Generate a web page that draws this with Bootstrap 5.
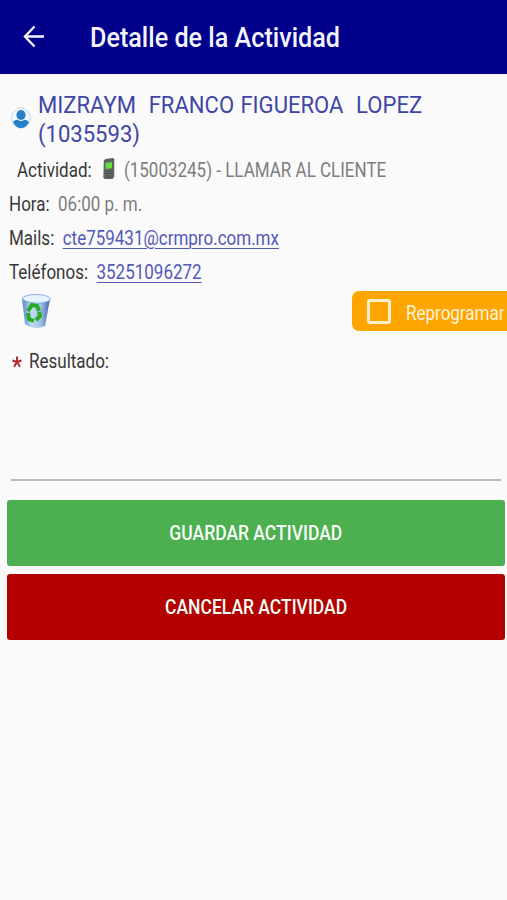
<!DOCTYPE html>
<html lang="es">
<head>
<meta charset="utf-8">
<meta name="viewport" content="width=device-width, initial-scale=1">
<title>Detalle de la Actividad</title>
<link href="https://cdn.jsdelivr.net/npm/bootstrap@5.3.0/dist/css/bootstrap.min.css" rel="stylesheet">
<style>
body{background:#fafafa;font-family:Roboto,"Liberation Sans",sans-serif;color:#383838;min-height:900px;overflow:hidden}
.topbar{background:#00008b;height:74px;padding:0 0 0 22px}
.topbar h1{font-size:27px;font-weight:500;line-height:74px;margin:0 0 0 45px;padding-top:1px;color:#f4f4ff;transform:scaleX(.932)}
.squeeze{transform:scaleX(.85);transform-origin:0 50%;white-space:pre}
.person{height:63px;margin-top:16px;padding-left:11px}
.person h2{font-size:24.5px;font-weight:400;line-height:29px;margin:0 0 0 7px;color:#3f46a6;transform:scaleX(.9)}
.gapword{word-spacing:1px}
.info{font-size:20px;line-height:34px;height:34px;padding-left:9px}
.info .val{color:#7d7d7d}
.info a{color:#5258b8;text-decoration-thickness:1px;text-underline-offset:3px}
.tools{height:41px;margin-top:2px}
.again{background:#ffa500;color:#fff3dc;width:155px;height:40px;border-radius:7px 0 0 7px;padding-left:15px;font-size:20px}
.again .squeeze{width:100px;padding-top:3px}
.box{width:24px;height:25px;border:3px solid #fff0cc;border-radius:3px;margin:1px 15px 0 0}
.req{width:10px;height:12px;margin:1px 7px 0 0}
.result{height:103px;margin:0 6px 0 11px;border-bottom:2px solid #b9b9b9}
.actions{margin:19px 2px 0 7px;gap:8px}
.actions .btn{height:66px;border:0;border-radius:3px;font-size:20px;font-weight:500;color:#f8fff8;padding-top:6px}
.actions .squeeze{transform:scaleX(.875);transform-origin:50% 50%}
.save{background:#4caf50!important}
.cancel{background:#b20000!important}
</style>
</head>
<body>
<header class="topbar d-flex align-items-center">
  <svg width="23" height="24" viewBox="0 0 23 24" fill="none" stroke="#f4f4ff" stroke-width="2.4"><path d="M22 11.5H3M12.5 1.5 3 11.5l9.5 10"/></svg>
  <h1 class="squeeze">Detalle de la Actividad</h1>
</header>
<main>
  <section class="person d-flex align-items-start">
    <svg class="flex-shrink-0" style="margin-top:17px" width="20" height="22" viewBox="0 0 20 22"><ellipse cx="10" cy="11" rx="9.4" ry="10.2" fill="#f2f8fc" stroke="#c3d8e6"/><ellipse cx="10" cy="8" rx="4.6" ry="5" fill="#2480c6"/><path d="M2 15q3-3 5-2 3 2 6 0 2-1 5 2-3 6-8 6t-8-6z" fill="#2480c6"/></svg>
    <h2 class="squeeze"><span class="gapword">MIZRAYM  FRANCO FIGUEROA  LOPEZ</span>
(1035593)</h2>
  </section>
  <div class="info d-flex align-items-center" style="padding-left:17px"><div class="squeeze d-flex align-items-center"><span>Actividad:</span><svg style="margin:-3px 10px 0 12px" width="16" height="21" viewBox="0 0 15 21" preserveAspectRatio="none"><path d="M2 2.5 4 1 12 0l1.500 1v18l-2 2H3l-1.500-1.500z" fill="#5c605c"/><path d="M3 4h8v15H3z" fill="#6a6d6a"/><path d="M4 5 11 4v6l-7 1z" fill="#65df3b"/><path d="M4 13h7M4 15.500h7M4 18h7" stroke="#404340"/></svg><span class="val">(15003245) - LLAMAR AL CLIENTE</span></div></div>
  <div class="info"><div class="squeeze">Hora:  <span class="val">06:00 p. m.</span></div></div>
  <div class="info"><div class="squeeze">Mails:  <a href="#">cte759431@crmpro.com.mx</a></div></div>
  <div class="info"><div class="squeeze">Teléfonos:  <a href="#">35251096272</a></div></div>
  <div class="tools d-flex justify-content-between">
    <svg style="margin:3px 0 0 21px" width="30" height="35" viewBox="0 0 30 35"><defs><linearGradient id="bin"><stop stop-color="#4f86cf"/><stop offset=".35" stop-color="#c5dcf4"/><stop offset=".7" stop-color="#9dbbe2"/><stop offset="1" stop-color="#3b62ae"/></linearGradient></defs><path d="M1 4 4 30q9 7 20 2L29 5z" fill="url(#bin)"/><path d="M1 4Q8-1 22 1q9 2 7 5-6 4-16 3T1 4z" fill="#e6f2fc" stroke="#739fd5" stroke-width=".8"/><path d="m7 17 4-6 5 1 2 5M7 19l1 6 5 2M15 26l4-4-1-4" fill="none" stroke="#27ac24" stroke-width="4"/><path d="m20 14 3 2-2 3 3 3-3 4" fill="none" stroke="#7587a8" opacity=".6"/></svg>
    <div class="again d-flex align-items-center"><span class="box flex-shrink-0"></span><span class="squeeze">Reprogramar</span></div>
  </div>
  <div class="info d-flex align-items-center" style="margin-top:12px;padding-left:12px"><svg class="req" viewBox="0 0 10 12" stroke="#b3242a" stroke-width="1.9"><path d="M5 6V.5M5 6 .5 4.5M5 6l4.5-1.5M5 6l-3 4.8M5 6l3 4.8"/></svg><div class="squeeze">Resultado:</div></div>
  <div class="result"></div>
  <div class="actions d-grid">
    <button class="btn save"><span class="squeeze d-inline-block">GUARDAR ACTIVIDAD</span></button>
    <button class="btn cancel"><span class="squeeze d-inline-block">CANCELAR ACTIVIDAD</span></button>
  </div>
</main>
<script src="https://cdn.jsdelivr.net/npm/bootstrap@5.3.0/dist/js/bootstrap.bundle.min.js"></script>
</body>
</html>
